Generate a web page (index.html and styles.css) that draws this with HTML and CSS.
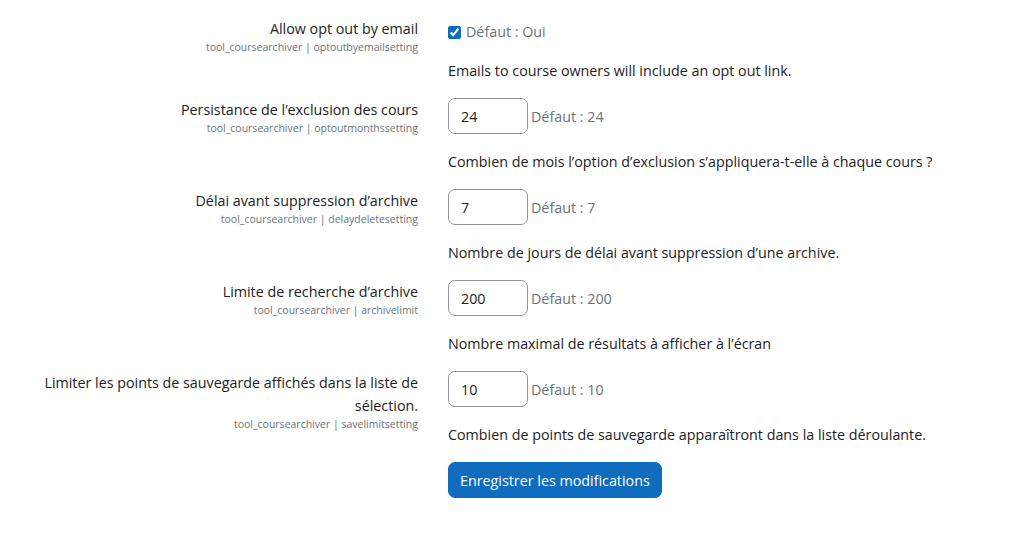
FILE: index.html
```html
<!DOCTYPE html>
<html lang="fr">
<head>
<meta charset="utf-8">
<title>Paramètres</title>
<link rel="stylesheet" href="styles.css">
</head>
<body>
<form class="settings">
  <div class="item">
    <div class="label-col">
      <label class="label" for="optout">Allow opt out by email</label>
      <span class="shortname">tool_coursearchiver | optoutbyemailsetting</span>
    </div>
    <div class="field-col">
      <div class="setting setting-check">
        <input type="checkbox" id="optout" class="check" checked>
        <span class="defaultinfo">Défaut : Oui</span>
      </div>
      <div class="description">Emails to course owners will include an opt out link.</div>
    </div>
  </div>

  <div class="item">
    <div class="label-col">
      <label class="label" for="months">Persistance de l’exclusion des cours</label>
      <span class="shortname">tool_coursearchiver | optoutmonthssetting</span>
    </div>
    <div class="field-col">
      <div class="setting">
        <input type="text" id="months" class="text-input" value="24">
        <span class="defaultinfo">Défaut : 24</span>
      </div>
      <div class="description">Combien de mois l’option d’exclusion s’appliquera-t-elle à chaque cours ?</div>
    </div>
  </div>

  <div class="item">
    <div class="label-col">
      <label class="label" for="delay">Délai avant suppression d’archive</label>
      <span class="shortname">tool_coursearchiver | delaydeletesetting</span>
    </div>
    <div class="field-col">
      <div class="setting">
        <input type="text" id="delay" class="text-input" value="7">
        <span class="defaultinfo">Défaut : 7</span>
      </div>
      <div class="description">Nombre de jours de délai avant suppression d’une archive.</div>
    </div>
  </div>

  <div class="item">
    <div class="label-col">
      <label class="label" for="limit">Limite de recherche d’archive</label>
      <span class="shortname">tool_coursearchiver | archivelimit</span>
    </div>
    <div class="field-col">
      <div class="setting">
        <input type="text" id="limit" class="text-input" value="200">
        <span class="defaultinfo">Défaut : 200</span>
      </div>
      <div class="description">Nombre maximal de résultats à afficher à l’écran</div>
    </div>
  </div>

  <div class="item">
    <div class="label-col">
      <label class="label" for="save">Limiter les points de sauvegarde affichés dans la liste de sélection.</label>
      <span class="shortname">tool_coursearchiver | savelimitsetting</span>
    </div>
    <div class="field-col">
      <div class="setting">
        <input type="text" id="save" class="text-input" value="10">
        <span class="defaultinfo">Défaut : 10</span>
      </div>
      <div class="description">Combien de points de sauvegarde apparaîtront dans la liste déroulante.</div>
    </div>
  </div>

  <div class="actions">
    <button type="button" class="btn-primary">Enregistrer les modifications</button>
  </div>
</form>
</body>
</html>
```

FILE: styles.css
```css
html, body {
  margin: 0;
  padding: 0;
  background: #ffffff;
}

body {
  font-family: "Segoe UI", "Open Sans", sans-serif;
  font-size: 14.3px;
  line-height: 23px;
  color: #1d2125;
}

.settings {
  padding-top: 17px;
}

.item {
  display: flex;
  margin-bottom: 16px;
}

.label-col {
  flex: 0 0 385px;
  margin-left: 18px;
  padding: 0 15px;
  text-align: right;
  display: flex;
  flex-direction: column;
  align-items: flex-end;
}

.label {
  display: block;
}

.shortname {
  display: block;
  font-size: 10.5px;
  line-height: 14px;
  color: #6a737b;
}

.field-col {
  padding-left: 15px;
  flex: 1;
}

.setting {
  display: flex;
  align-items: center;
}

.setting-check {
  padding-top: 4px;
  line-height: 22px;
}

.check {
  width: 13px;
  height: 13px;
  margin: 0 5px 0 0;
  accent-color: #0f6cbf;
}

.text-input {
  box-sizing: border-box;
  width: 80px;
  height: 36px;
  padding: 6px 12px;
  border: 1px solid #8f959e;
  border-radius: 7px;
  font: inherit;
  color: #1d2125;
  background: #fff;
}

.defaultinfo {
  color: #6a737b;
  margin-left: 3px;
}

.setting-check .defaultinfo {
  margin-left: 0;
}

.description {
  margin-top: 16px;
}

.actions {
  padding-left: 448px;
}

.btn-primary {
  box-sizing: border-box;
  height: 36px;
  padding: 0 11px;
  border: 1px solid #0f6cbf;
  border-radius: 7px;
  background: #0f6cbf;
  color: #fff;
  font: inherit;
  cursor: pointer;
}
```
